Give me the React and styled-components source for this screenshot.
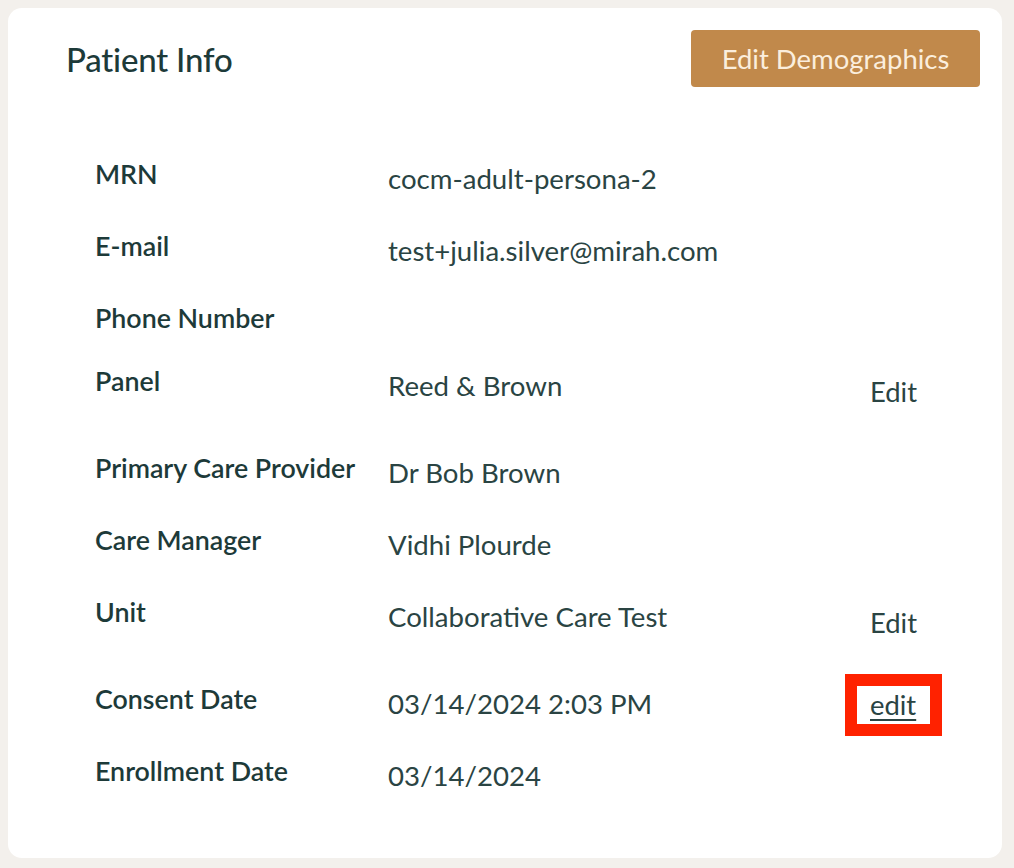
import styled, { createGlobalStyle } from "styled-components";

const GlobalStyle = createGlobalStyle`
  body {
    margin: 0;
    background: #f3f0ec;
    font-family: Lato, "Open Sans", sans-serif;
    color: #1d3a39;
  }
`;

const Card = styled.div`
  margin: 8px;
  width: 994px;
  height: 850px;
  box-sizing: border-box;
  background: #fff;
  border-radius: 14px;
  padding: 22px 22px 0 58px;
`;

const Header = styled.div`
  display: flex;
  align-items: center;
  justify-content: space-between;
`;

const Title = styled.h2`
  margin: 0;
  font-size: 33px;
  font-weight: 500;
  color: #1d3a39;
  letter-spacing: -0.2px;
`;

const PrimaryButton = styled.button`
  height: 57px;
  width: 289px;
  background: #c1894b;
  color: #fbeedd;
  border: none;
  border-radius: 4px;
  font-family: inherit;
  font-size: 27.5px;
  cursor: pointer;
`;

const List = styled.div`
  margin-top: 71px;
  padding-left: 29px;
`;

const Row = styled.div`
  display: grid;
  grid-template-columns: 293px 482px auto;
  align-items: start;
  padding-bottom: 31px;
`;

const Label = styled.div`
  font-size: 26.8px;
  font-weight: 600;
  line-height: 32px;
  color: #1d3a39;
`;

const Value = styled.div`
  font-size: 27.6px;
  line-height: 32px;
  padding: 5px 0 4px;
  color: #2a4443;
`;

const EditButton = styled.button`
  background: none;
  border: none;
  padding: 11px 0 13px;
  font-family: inherit;
  font-size: 27.4px;
  line-height: 32px;
  color: #2a4443;
  text-align: left;
  cursor: pointer;
`;

const EditLink = styled.a`
  position: relative;
  display: inline-block;
  margin-top: 6px;
  font-size: 27.4px;
  line-height: 32px;
  color: #2a4443;
  text-decoration: underline;
  text-underline-offset: 4px;
  cursor: pointer;

  &::after {
    content: "";
    position: absolute;
    top: -15px;
    bottom: -15px;
    left: -25px;
    right: -26px;
    border: 12px solid #ff2200;
  }
`;

const rows = [
  { label: "MRN", value: "cocm-adult-persona-2" },
  { label: "E-mail", value: "test+julia.silver@mirah.com" },
  { label: "Phone Number" },
  { label: "Panel", value: "Reed & Brown", action: "button" },
  { label: "Primary Care Provider", value: "Dr Bob Brown" },
  { label: "Care Manager", value: "Vidhi Plourde" },
  { label: "Unit", value: "Collaborative Care Test", action: "button" },
  { label: "Consent Date", value: "03/14/2024 2:03 PM", action: "link" },
  { label: "Enrollment Date", value: "03/14/2024" },
];

export default function App() {
  return (
    <>
      <GlobalStyle />
      <Card>
        <Header>
          <Title>Patient Info</Title>
          <PrimaryButton>Edit Demographics</PrimaryButton>
        </Header>
        <List>
          {rows.map((r) => (
            <Row key={r.label}>
              <Label>{r.label}</Label>
              {r.value ? <Value>{r.value}</Value> : <div />}
              <div>
                {r.action === "button" && <EditButton>Edit</EditButton>}
                {r.action === "link" && <EditLink>edit</EditLink>}
              </div>
            </Row>
          ))}
        </List>
      </Card>
    </>
  );
}
